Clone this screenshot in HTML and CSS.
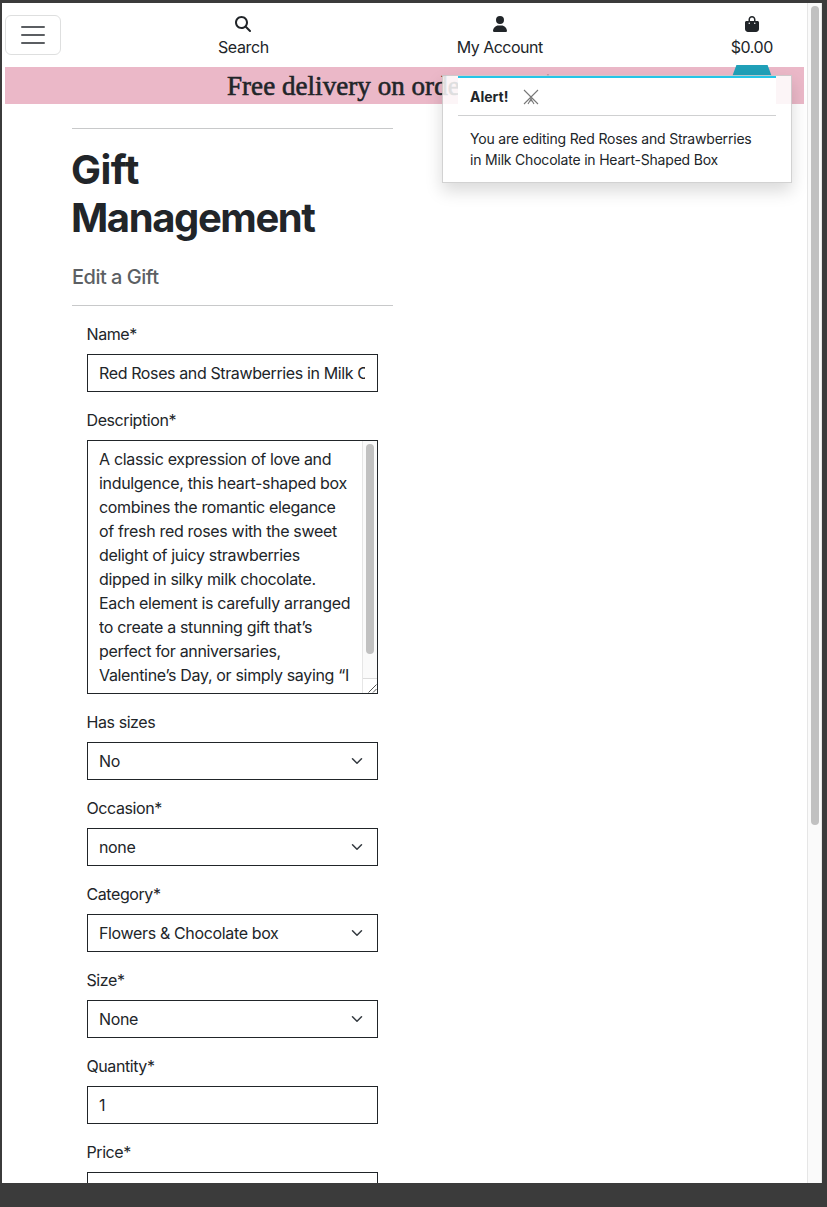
FILE: index.html
```html
<!DOCTYPE html>
<html lang="en">
<head>
<meta charset="utf-8">
<title>Gift Management</title>
<link rel="stylesheet" href="styles.css">
</head>
<body>
<div class="window">
  <div class="page">
    <header class="topbar">
      <button class="toggler" aria-label="Menu">
        <svg width="30" height="30" viewBox="0 0 30 30"><path d="M4 7h22M4 15h22M4 23h22" stroke="#5b5e62" stroke-width="2" stroke-linecap="round"/></svg>
      </button>
      <nav class="links">
        <a class="link search">
          <svg width="16" height="16" viewBox="0 0 512 512"><path fill="currentColor" d="M416 208c0 45.900-14.900 88.300-40 122.700L502.600 457.400c12.500 12.500 12.500 32.800 0 45.300s-32.800 12.500-45.300 0L330.700 376c-34.400 25.200-76.800 40-122.700 40C93.100 416 0 322.900 0 208S93.100 0 208 0S416 93.100 416 208zM208 352a144 144 0 1 0 0-288 144 144 0 1 0 0 288z"/></svg>
          <span>Search</span>
        </a>
        <a class="link account">
          <svg width="14" height="16" viewBox="0 0 448 512"><path fill="currentColor" d="M224 256A128 128 0 1 0 224 0a128 128 0 1 0 0 256zm-45.700 48C79.800 304 0 383.800 0 482.300C0 498.700 13.300 512 29.700 512H418.300c16.400 0 29.700-13.300 29.700-29.700C448 383.800 368.200 304 269.700 304H178.300z"/></svg>
          <span>My Account</span>
        </a>
        <a class="link bag">
          <svg width="14" height="16" viewBox="0 0 448 512"><path fill="currentColor" d="M160 112c0-35.300 28.700-64 64-64s64 28.700 64 64v48H160V112zm-48 48H48c-26.500 0-48 21.500-48 48V416c0 53 43 96 96 96H352c53 0 96-43 96-96V208c0-26.500-21.500-48-48-48H336V112C336 50.100 285.900 0 224 0S112 50.100 112 112v48zm24 48a24 24 0 1 1 0 48 24 24 0 1 1 0-48zm152 24a24 24 0 1 1 48 0 24 24 0 1 1 -48 0z"/></svg>
          <span>$0.00</span>
        </a>
      </nav>
    </header>
    <div class="banner"><span>Free delivery on orders over $50!</span></div>

    <main class="content">
      <hr>
      <h1>Gift<br>Management</h1>
      <h2>Edit a Gift</h2>
      <hr>
      <form class="form">
        <label>Name*</label>
        <div class="control"><span class="clip">Red Roses and Strawberries in Milk Chocolate</span></div>
        <label>Description*</label>
        <div class="control area">
          <div class="copy">A classic expression of love and<br>indulgence, this heart-shaped box<br>combines the romantic elegance<br>of fresh red roses with the sweet<br>delight of juicy strawberries<br>dipped in silky milk chocolate.<br>Each element is carefully arranged<br>to create a stunning gift that’s<br>perfect for anniversaries,<br>Valentine’s Day, or simply saying “I<br>love you.” The</div>
          <div class="area-track">
            <div class="area-thumb"></div>
            <svg class="grip" width="14" height="14" viewBox="0 0 14 14"><path d="M5.500 13.500l8-8M10 13.500l3.500-3.500" stroke="#555" fill="none"/></svg>
          </div>
        </div>
        <label>Has sizes</label>
        <div class="control select"><span>No</span><svg width="16" height="12" viewBox="0 0 16 16"><path d="m2 5 6 6 6-6"/></svg></div>
        <label>Occasion*</label>
        <div class="control select"><span>none</span><svg width="16" height="12" viewBox="0 0 16 16"><path d="m2 5 6 6 6-6"/></svg></div>
        <label>Category*</label>
        <div class="control select"><span>Flowers &amp; Chocolate box</span><svg width="16" height="12" viewBox="0 0 16 16"><path d="m2 5 6 6 6-6"/></svg></div>
        <label>Size*</label>
        <div class="control select"><span>None</span><svg width="16" height="12" viewBox="0 0 16 16"><path d="m2 5 6 6 6-6"/></svg></div>
        <label>Quantity*</label>
        <div class="control"><span>1</span></div>
        <label>Price*</label>
        <div class="control"></div>
      </form>
    </main>
  </div>
  <div class="track"><div class="thumb"></div></div>

  <div class="arrow"></div>
  <aside class="toast">
    <div class="toast-head">
      <strong>Alert!</strong>
      <svg width="16" height="16" viewBox="0 0 16 16"><path d="M1 1l14 14M15 1L1 15M8 7.500v5M8 10l-3 5M8 10l3 5" stroke="#777" stroke-width="1.100" fill="none"/></svg>
    </div>
    <div class="toast-body">You are editing Red Roses and Strawberries<br>in Milk Chocolate in Heart-Shaped Box</div>
  </aside>
</div>
</body>
</html>
```
FILE: styles.css
```css
* { box-sizing: border-box; }
body {
  margin: 0;
  height: 1207px;
  padding: 3px 5px 24px 2px;
  overflow: hidden;
  background: #3b3b3b;
  color: #212529;
  font: 16px/24px Inter, "Liberation Sans", sans-serif;
  letter-spacing: -0.4px;
}
.window {
  position: relative;
  display: flex;
  height: 1180px;
  overflow: hidden;
  background: #fff;
}
.page { flex: 1; padding: 0 3px; min-width: 0; }
.track {
  width: 15px;
  padding: 3px 2px 0 3px;
  background: #fafafa;
  border-left: 1px solid #e6e6e6;
  border-right: 1px solid #e6e6e6;
}
.thumb { width: 8px; height: 819px; border-radius: 4px; background: #c1c1c1; }

.topbar { display: flex; height: 64px; padding-top: 12px; }
.toggler {
  display: flex;
  align-items: center;
  justify-content: center;
  width: 56px;
  height: 40px;
  padding: 0;
  background: #fff;
  border: 1px solid #dedfdf;
  border-radius: 6px;
}
.links { display: flex; flex: 1; justify-content: space-between; padding: 1px 31px 0 157px; }
.link { display: flex; flex-direction: column; align-items: center; }
.link svg { margin-bottom: 3px; }
.account { letter-spacing: -0.5px; }

.banner {
  height: 37px;
  padding-left: 222px;
  overflow: hidden;
  background: #ebb8c8;
  font: 27px/38px "Liberation Serif", serif;
  letter-spacing: 0.05px;
  white-space: nowrap;
  -webkit-text-stroke: 0.6px #212529;
}

.content { width: 321px; margin: 24px 0 0 67px; }
hr { height: 1px; margin: 0; border: 0; background: #c8c9ca; }
h1 { margin: 17px 0 0 -1px; font-size: 40px; line-height: 48px; font-weight: 700; letter-spacing: -1.4px; }
h1::first-line { letter-spacing: -0.5px; }
h2 { margin: 23px 0 16px; font-size: 20px; line-height: 24px; font-weight: 500; letter-spacing: -0.5px; color: #5c5f63; }
.form { padding: 16px 15px 0; }
label { display: block; height: 24px; margin: 0 0 8px -0.5px; letter-spacing: -0.42px; }
.control {
  display: flex;
  align-items: center;
  height: 38px;
  margin-bottom: 16px;
  padding: 0 12px 0 11px;
  border: 1px solid #212529;
  white-space: nowrap;
  letter-spacing: -0.35px;
}
.clip { overflow: hidden; letter-spacing: -0.38px; }
.select { justify-content: space-between; }
.select svg { fill: none; stroke: #343a40; stroke-width: 2; stroke-linecap: round; stroke-linejoin: round; }
.area { height: 254px; align-items: stretch; padding-right: 0; overflow: hidden; letter-spacing: -0.33px; }
.copy { flex: 1; padding-top: 6px; height: 252px; overflow: hidden; }
.area-track {
  display: flex;
  flex-direction: column;
  justify-content: space-between;
  width: 15px;
  background: #fafafa;
  border-left: 1px solid #e6e6e6;
}
.area-thumb { width: 8px; height: 210px; margin: 3px 0 0 3px; border-radius: 4px; background: #c1c1c1; }
.grip { height: 15px; border-top: 1px solid #dcdcdc; background: #fff; }

.arrow {
  position: absolute;
  left: 730px;
  top: 62px;
  width: 40px;
  height: 12px;
  background: #20a0b8;
  clip-path: polygon(11% 0, 89% 0, 100% 100%, 0 100%);
}
.toast {
  position: absolute;
  left: 440px;
  top: 72px;
  width: 350px;
  height: 108px;
  padding: 0 15px;
  background: rgba(255, 255, 255, 0.85);
  border: 1px solid rgba(0, 0, 0, 0.176);
  box-shadow: 0 8px 16px rgba(0, 0, 0, 0.15);
  font-size: 14px;
  line-height: 21px;
  letter-spacing: -0.2px;
}
.toast-head {
  display: flex;
  align-items: center;
  gap: 15px;
  height: 40px;
  padding: 0 12px;
  background: #fff;
  border-top: 2px solid #25c5e8;
  border-bottom: 1px solid #cfd0d1;
}
.toast-head strong { letter-spacing: 0; }
.toast-body { padding: 12px 12px 0; white-space: nowrap; }
```
